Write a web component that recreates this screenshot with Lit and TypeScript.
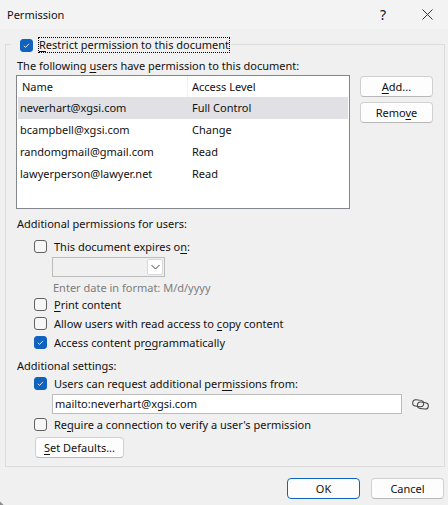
import { LitElement, html, css } from 'lit';
import { customElement } from 'lit/decorators.js';

const users = [
  { name: 'neverhart@xgsi.com', level: 'Full Control', selected: true },
  { name: 'bcampbell@xgsi.com', level: 'Change', selected: false },
  { name: 'randomgmail@gmail.com', level: 'Read', selected: false },
  { name: 'lawyerperson@lawyer.net', level: 'Read', selected: false },
];

@customElement('app-root')
export class AppRoot extends LitElement {
  static styles = css`
    :host {
      display: block;
      width: 448px;
      height: 505px;
      overflow: hidden;
      /* tiny bit of the rounded window corner, bottom left */
      background: linear-gradient(45deg, #8c8c8c 2px, transparent 3px) no-repeat 0 100% / 4px 4px, #f0f0f0;
      color: #111;
      font: 11px/16px 'Noto Sans', sans-serif;
    }
    u { text-underline-offset: 2px; }
    .titlebar {
      height: 29px;
      background: #f3f3f3;
      display: flex;
      align-items: center;
      padding: 0 15px 0 7px;
    }
    .title { flex: 1; }
    .help { font-size: 14px; margin-right: 36px; }
    .group {
      margin: 15px 3px 0 5px;
      height: 423px;
      box-sizing: border-box;
      border: 1px solid #dcdcdc;
      padding: 0 10px;
      position: relative;
    }
    /* sits on the group's top border */
    .legend {
      position: absolute;
      top: -8px;
      left: 5px;
      display: flex;
      align-items: center;
      gap: 5px;
      background: #f0f0f0;
      padding: 0 1px 0 9px;
    }
    .focus { outline: 1px dotted #000; outline-offset: -1px; padding: 0 1px; height: 16px; }
    .box {
      width: 13px;
      height: 13px;
      flex: none;
      box-sizing: border-box;
      border: 1px solid #616161;
      border-radius: 3px;
      background: #f6f6f6;
      display: block;
    }
    .box.on {
      background: #0f62be;
      border-color: #0f62be;
      display: flex;
      align-items: center;
      justify-content: center;
    }
    .label-top { margin: 13px 0 0 1px; height: 16px; }
    .table-row { display: flex; margin-top: 1px; gap: 10px; }
    .table {
      width: 334px;
      height: 134px;
      flex: none;
      background: #fff;
      border: 1px solid #83878c;
      box-sizing: border-box;
      padding: 0 1px;
    }
    .row { display: grid; grid-template-columns: 170px 1fr; height: 22px; align-items: center; }
    .row span:first-child { padding-left: 2px; }
    .row span:last-child { padding-left: 4px; }
    .row.head { height: 21px; }
    .row.head span:first-child { padding-left: 4px; border-right: 1px solid #f0f0f0; height: 21px; line-height: 21px; }
    .row.selected { background: #e0e0e5; }
    .side { display: flex; flex-direction: column; gap: 5px; margin-top: 1px; }
    button {
      font: inherit;
      color: inherit;
      width: 73px;
      height: 21px;
      padding: 0;
      background: #fdfdfd;
      border: 1px solid #d0d0d0;
      border-bottom-color: #b8b8b8;
      border-radius: 4px;
      box-sizing: border-box;
      display: block;
    }
    .section { margin: 7px 0 0 1px; height: 16px; }
    .section.second { margin-top: 6px; }
    .check { display: flex; align-items: center; gap: 7px; margin-left: 18px; height: 19px; }
    .check.first { margin-top: 5px; }
    .check.after-input { margin-top: 1px; }
    .combo {
      width: 113px;
      height: 20px;
      margin: 1px 0 0 36px;
      box-sizing: border-box;
      border: 1px solid #bcbcbc;
      display: flex;
      justify-content: flex-end;
      align-items: center;
      padding-right: 1px;
    }
    .combo i {
      width: 16px;
      height: 16px;
      box-sizing: border-box;
      background: #fff;
      border: 1px solid #d8d8d8;
      border-radius: 2px;
      display: flex;
      align-items: center;
      justify-content: center;
    }
    .hint { color: #7d7d7d; margin: 3px 0 0 37px; height: 15px; }
    .input-row { display: flex; align-items: center; margin: 1px 0 0 36px; gap: 10px; }
    .input {
      width: 350px;
      height: 20px;
      line-height: 18px;
      box-sizing: border-box;
      background: #fff;
      border: 1px solid #bcbcbc;
      padding-left: 2px;
      flex: none;
    }
    .defaults { width: 89px; margin: 3px 0 0 19px; }
    .footer { display: flex; justify-content: flex-end; gap: 11px; margin: 11px 4px 0 0; }
    .footer .primary { border: 1px solid #0f62be; }
  `;

  private box(on = false) {
    return on
      ? html`<span class="box on"><svg width="9" height="9" viewBox="0 0 9 9"><path d="M1.8 4.8 3.6 6.4 7 2.8" fill="none" stroke="#dce8f6" stroke-width="1"/></svg></span>`
      : html`<span class="box"></span>`;
  }

  render() {
    return html`
      <div class="titlebar">
        <span class="title">Permission</span>
        <span class="help">?</span>
        <svg width="11" height="11" viewBox="0 0 11 11"><path d="M.5.5l10 10M10.5.5l-10 10" stroke="#333" fill="none"/></svg>
      </div>
      <div class="group">
        <div class="legend">
          ${this.box(true)}
          <span class="focus"><u>R</u>estrict permission to this document</span>
        </div>
        <div class="label-top">The following <u>u</u>sers have permission to this document:</div>
        <div class="table-row">
          <div class="table">
            <div class="row head"><span>Name</span><span>Access Level</span></div>
            ${users.map(
              (u) => html`<div class="row ${u.selected ? 'selected' : ''}"><span>${u.name}</span><span>${u.level}</span></div>`,
            )}
          </div>
          <div class="side">
            <button><u>A</u>dd...</button>
            <button>Remo<u>v</u>e</button>
          </div>
        </div>
        <div class="section">Additional permissions for users:</div>
        <div class="check first">${this.box()}<span>This document expires o<u>n</u>:</span></div>
        <div class="combo"><i><svg width="9" height="6" viewBox="0 0 9 6"><path d="M.5 1l4 4 4-4" fill="none" stroke="#444"/></svg></i></div>
        <div class="hint">Enter date in format: M/d/yyyy</div>
        <div class="check">${this.box()}<span><u>P</u>rint content</span></div>
        <div class="check">${this.box()}<span>Allow users with read access to <u>c</u>opy content</span></div>
        <div class="check">${this.box(true)}<span>Access content pr<u>o</u>grammatically</span></div>
        <div class="section second">Additional settings:</div>
        <div class="check">${this.box(true)}<span>Users can request additional per<u>m</u>issions from:</span></div>
        <div class="input-row">
          <div class="input">mailto:neverhart@xgsi.com</div>
          <svg width="17" height="11" viewBox="0 0 17 11"><g fill="none" stroke="#444"><rect x=".7" y="1" width="11" height="6.4" rx="3.2" transform="rotate(8 6 4)"/><rect x="5.3" y="3.4" width="11" height="6.4" rx="3.2" transform="rotate(8 11 7)"/></g></svg>
        </div>
        <div class="check after-input">${this.box()}<span>Re<u>q</u>uire a connection to verify a user's permission</span></div>
        <button class="defaults"><u>S</u>et Defaults...</button>
      </div>
      <div class="footer">
        <button class="primary">OK</button>
        <button>Cancel</button>
      </div>
    `;
  }
}
